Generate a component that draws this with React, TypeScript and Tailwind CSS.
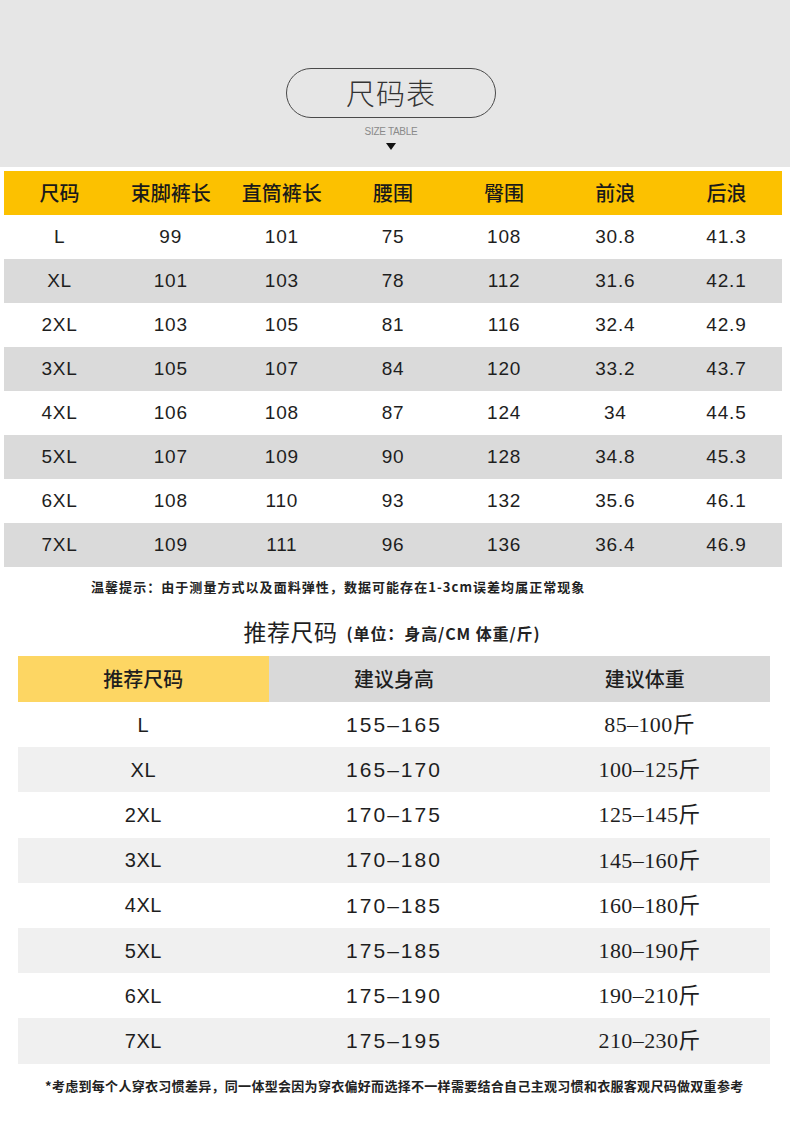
import React from "react";

const sizeRows = [
  ["L", "99", "101", "75", "108", "30.8", "41.3"],
  ["XL", "101", "103", "78", "112", "31.6", "42.1"],
  ["2XL", "103", "105", "81", "116", "32.4", "42.9"],
  ["3XL", "105", "107", "84", "120", "33.2", "43.7"],
  ["4XL", "106", "108", "87", "124", "34", "44.5"],
  ["5XL", "107", "109", "90", "128", "34.8", "45.3"],
  ["6XL", "108", "110", "93", "132", "35.6", "46.1"],
  ["7XL", "109", "111", "96", "136", "36.4", "46.9"],
];

const headers = ["尺码", "束脚裤长", "直筒裤长", "腰围", "臀围", "前浪", "后浪"];

const recRows = [
  ["L", "155–165", "85–100斤"],
  ["XL", "165–170", "100–125斤"],
  ["2XL", "170–175", "125–145斤"],
  ["3XL", "170–180", "145–160斤"],
  ["4XL", "170–185", "160–180斤"],
  ["5XL", "175–185", "180–190斤"],
  ["6XL", "175–190", "190–210斤"],
  ["7XL", "175–195", "210–230斤"],
];

export default function App() {
  return (
    <div className="w-[790px] h-[1134px] bg-white overflow-hidden text-[#1e1e1e] font-['Noto_Sans_CJK_SC',sans-serif]">
      {/* Top banner */}
      <div className="h-[167px] bg-[#e6e6e6] flex flex-col items-center pt-[68px] pr-[8px]">
        <div className="w-[210px] h-[50px] rounded-full border-[1.5px] border-[#4a4a4a] flex items-center justify-center text-[29px] font-light text-[#333] tracking-[1px]">
          尺码表
        </div>
        <div className="mt-[9px] text-[10px] leading-[10px] text-[#8a8a8a] tracking-[-0.3px] font-['Liberation_Sans_Narrow','Liberation_Sans',sans-serif]">
          SIZE TABLE
        </div>
        <div className="mt-[6px] w-0 h-0 border-l-[5px] border-r-[5px] border-t-[7px] border-l-transparent border-r-transparent border-t-[#111]" />
      </div>

      {/* Size table */}
      <div className="mx-[4px] mt-[4px] w-[778px]">
        <div className="grid grid-cols-7 h-[44px] bg-[#fcc100] items-center">
          {headers.map((h) => (
            <div key={h} className="text-center text-[20px] font-medium text-[#1a1a1a]">
              {h}
            </div>
          ))}
        </div>
        {sizeRows.map((r, i) => (
          <div
            key={r[0]}
            className={`grid grid-cols-7 h-[44px] items-center ${i % 2 === 1 ? "bg-[#dadada]" : "bg-white"}`}
          >
            {r.map((c, j) => (
              <div
                key={j}
                className="text-center text-[19px] tracking-[0.8px] text-[#1e1e1e] font-['Liberation_Sans',sans-serif]"
              >
                {c}
              </div>
            ))}
          </div>
        ))}
      </div>

      {/* Note */}
      <div className="mt-[12px] pl-[91px] text-[13px] leading-[16px] font-bold tracking-[1.05px] text-[#222]">
        温馨提示：由于测量方式以及面料弹性，数据可能存在1-3cm误差均属正常现象
      </div>

      {/* Title */}
      <div className="mt-[21px] flex items-end justify-center pr-[6px]">
        <span className="text-[23px] leading-[30px] text-[#1e1e1e] tracking-[0.5px]">推荐尺码</span>
        <span className="ml-[9px] text-[16px] leading-[26px] font-bold tracking-[0.9px] text-[#222]">
          (单位：身高/CM 体重/斤)
        </span>
      </div>

      {/* Recommend table */}
      <div className="mx-[18px] mt-[10px] w-[752px]">
        <div className="grid grid-cols-3 h-[46px] items-center bg-[#d9d9d9]">
          <div className="h-full flex items-center justify-center bg-[#fdd663] text-[20px] font-medium">
            推荐尺码
          </div>
          <div className="text-center text-[20px] font-medium">建议身高</div>
          <div className="text-center text-[20px] font-medium">建议体重</div>
        </div>
        {recRows.map((r, i) => (
          <div
            key={r[0]}
            className={`grid grid-cols-3 h-[45.2px] items-center ${i % 2 === 1 ? "bg-[#f0f0f0]" : "bg-white"}`}
          >
            <div className="text-center text-[20px] tracking-[0.5px] font-['Liberation_Sans',sans-serif]">{r[0]}</div>
            <div className="text-center text-[21px] tracking-[2px] font-['Liberation_Sans',sans-serif]">{r[1]}</div>
            <div className="text-center text-[22px] tracking-[0.4px] pl-[10px] font-['Liberation_Serif','Noto_Sans_CJK_SC',serif]">
              {r[2]}
            </div>
          </div>
        ))}
      </div>

      {/* Footer note */}
      <div className="mt-[14px] pl-[45px] text-[13px] leading-[16px] font-bold tracking-[0.3px] text-[#222]">
        *考虑到每个人穿衣习惯差异，同一体型会因为穿衣偏好而选择不一样需要结合自己主观习惯和衣服客观尺码做双重参考
      </div>
    </div>
  );
}
